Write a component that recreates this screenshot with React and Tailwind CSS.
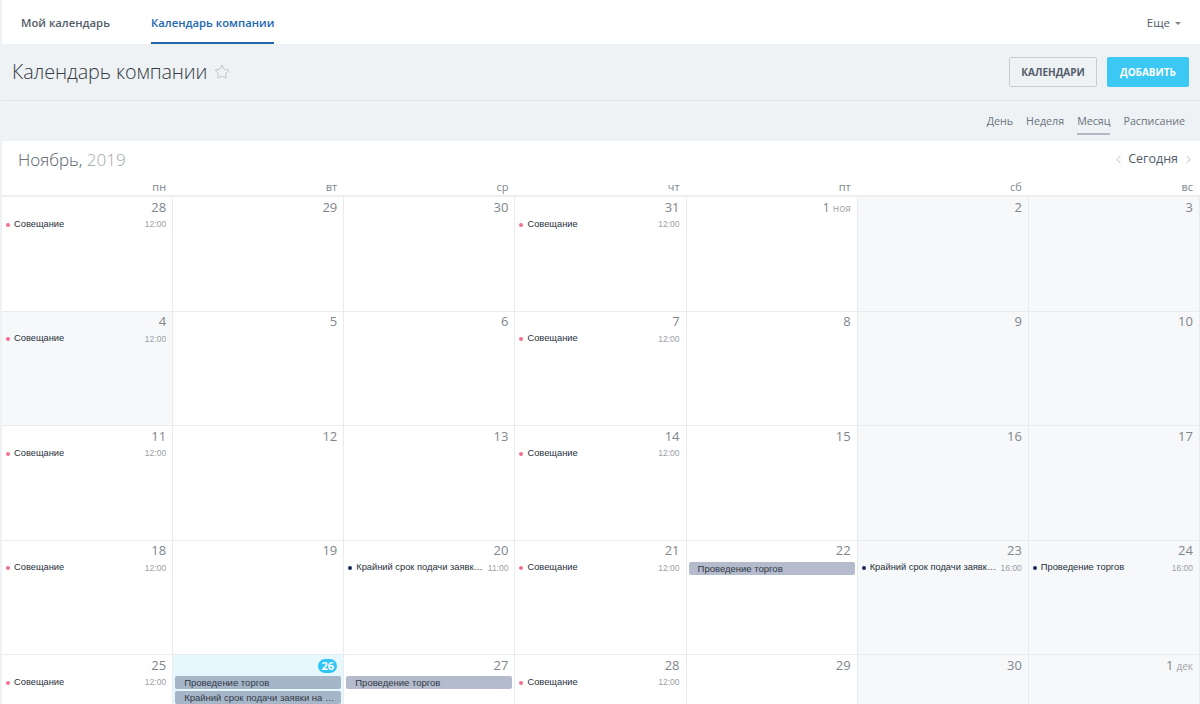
import { Star, ChevronLeft, ChevronRight } from "lucide-react";

const pink = "#f2708f";
const navy = "#1b2a59";

// each row: 7 cells
const weeks = [
  [
    { d: "28", ev: [{ t: "Совещание", time: "12:00", c: pink }] },
    { d: "29" },
    { d: "30" },
    { d: "31", ev: [{ t: "Совещание", time: "12:00", c: pink }] },
    { d: "1", m: "ноя" },
    { d: "2", off: true },
    { d: "3", off: true },
  ],
  [
    { d: "4", off: true, ev: [{ t: "Совещание", time: "12:00", c: pink }] },
    { d: "5" },
    { d: "6" },
    { d: "7", ev: [{ t: "Совещание", time: "12:00", c: pink }] },
    { d: "8" },
    { d: "9", off: true },
    { d: "10", off: true },
  ],
  [
    { d: "11", ev: [{ t: "Совещание", time: "12:00", c: pink }] },
    { d: "12" },
    { d: "13" },
    { d: "14", ev: [{ t: "Совещание", time: "12:00", c: pink }] },
    { d: "15" },
    { d: "16", off: true },
    { d: "17", off: true },
  ],
  [
    { d: "18", ev: [{ t: "Совещание", time: "12:00", c: pink }] },
    { d: "19" },
    { d: "20", ev: [{ t: "Крайний срок подачи заявки на аукцион", time: "11:00", c: navy }] },
    { d: "21", ev: [{ t: "Совещание", time: "12:00", c: pink }] },
    { d: "22", bars: ["Проведение торгов"] },
    { d: "23", off: true, ev: [{ t: "Крайний срок подачи заявки на аукцион", time: "16:00", c: navy }] },
    { d: "24", off: true, ev: [{ t: "Проведение торгов", time: "16:00", c: navy }] },
  ],
  [
    { d: "25", ev: [{ t: "Совещание", time: "12:00", c: pink }] },
    { d: "26", today: true, bars: ["Проведение торгов", "Крайний срок подачи заявки на аукцион"] },
    { d: "27", bars: ["Проведение торгов"] },
    { d: "28", ev: [{ t: "Совещание", time: "12:00", c: pink }] },
    { d: "29" },
    { d: "30", off: true },
    { d: "1", m: "дек", off: true },
  ],
];

const weekdays = ["пн", "вт", "ср", "чт", "пт", "сб", "вс"];

function DayCell({ cell }) {
  const bg = cell.today ? "bg-[#e6f8fe]" : cell.off ? "bg-[#f6f8f9]" : "bg-white";
  return (
    <div className={`${bg} border-r border-b border-[#e9ebee] overflow-hidden`}>
      <div className="h-[21px] flex items-center justify-end pr-[6px]">
        {cell.today ? (
          <span className="h-[14px] min-w-[19px] px-[3px] rounded-full bg-[#2fc6f6] text-white text-[11px] font-bold leading-none flex items-center justify-center">
            {cell.d}
          </span>
        ) : (
          <span className="text-[13px] text-[#80868e]">
            {cell.d}
            {cell.m && <span className="text-[10px] ml-[3px] text-[#a0a5ab]">{cell.m}</span>}
          </span>
        )}
      </div>
      <div className="flex flex-col gap-[2px] px-[2px]">
        {cell.bars &&
          cell.bars.map((b) => (
            <div
              key={b}
              className={`h-[13px] rounded-[2px] ${cell.today ? "bg-[#a6b6c9]" : "bg-[#b3bbcc]"} pl-[9px] pr-[6px] text-[9.5px] leading-[13px] text-[#333a45] truncate font-['Liberation_Sans',Arial,sans-serif]`}
            >
              {b}
            </div>
          ))}
        {cell.ev &&
          cell.ev.map((e) => (
            <div key={e.t} className="h-[13px] flex items-center pl-[2px] pr-[4px] font-['Liberation_Sans',Arial,sans-serif]">
              <span className="w-[4px] h-[4px] rounded-full shrink-0" style={{ backgroundColor: e.c }} />
              <span className="ml-[4px] text-[9.3px] text-[#27303b] truncate flex-1">{e.t}</span>
              <span className="ml-[3px] text-[8.5px] text-[#9aa0a6] shrink-0">{e.time}</span>
            </div>
          ))}
      </div>
    </div>
  );
}

export default function App() {
  return (
    <div className="w-[1200px] h-[704px] overflow-hidden bg-[#eef2f4] pl-[2px] font-['Open_Sans',sans-serif]">
      {/* top tabs */}
      <div className="h-[44px] bg-white flex items-stretch pl-[19px] pr-[19px]">
        <div className="flex items-center text-[11.3px] font-semibold text-[#535c69] mr-[41px] pt-[2px]">Мой календарь</div>
        <div className="flex items-center text-[11.3px] font-semibold text-[#2067b0] border-b-2 border-[#2067b0] pt-[4px]">
          Календарь компании
        </div>
        <div className="ml-auto flex items-center text-[11.5px] text-[#535c69] pt-[2px]">
          Еще
          <span className="ml-[5px] w-0 h-0 border-l-[3px] border-r-[3px] border-t-[3px] border-l-transparent border-r-transparent border-t-[#80868e]" />
        </div>
      </div>

      {/* title */}
      <div className="h-[57px] flex items-center pl-[10px] pr-[11px] border-b border-[#e1e5e9]">
        <h1 className="text-[19.8px] font-light text-[#333b45] leading-none tracking-[-0.1px]">Календарь компании</h1>
        <Star className="ml-[7px] w-[16px] h-[16px] text-[#b9bfc6]" strokeWidth={1.4} />
        <div className="ml-auto flex gap-[10px]">
          <button className="h-[30px] w-[88px] border border-[#c6cdd3] rounded-[2px] text-[10px] font-bold text-[#535c69]">
            КАЛЕНДАРИ
          </button>
          <button className="h-[30px] w-[82px] rounded-[2px] bg-[#3bc8f5] text-[10px] font-bold text-white">
            ДОБАВИТЬ
          </button>
        </div>
      </div>

      {/* views */}
      <div className="h-[40px] flex items-center justify-end pr-[15px] gap-[13px] text-[10.7px] text-[#6b737c]">
        <span>День</span>
        <span>Неделя</span>
        <span className="relative">
          Месяц
          <span className="absolute left-0 right-0 -bottom-[6px] h-[2px] bg-[#b3b9c0]" />
        </span>
        <span>Расписание</span>
      </div>

      {/* calendar */}
      <div className="bg-white">
        <div className="h-[37px] flex items-center pl-[16px] pr-[5px]">
          <div className="text-[17px] font-light text-[#535c69]">
            Ноябрь, <span className="text-[#a0a5ab]">2019</span>
          </div>
          <div className="ml-auto flex items-center text-[12.5px] text-[#535c69]">
            <ChevronLeft className="w-[13px] h-[13px] text-[#a8aeb4] mr-[3px]" strokeWidth={1.5} />
            Сегодня
            <ChevronRight className="w-[13px] h-[13px] text-[#a8aeb4] ml-[4px]" strokeWidth={1.5} />
          </div>
        </div>
        <div className="grid grid-cols-7 h-[19px] border-b-2 border-[#eceef0]">
          {weekdays.map((w) => (
            <div key={w} className="text-right pr-[7px] text-[11px] text-[#80868e] leading-[17px]">
              {w}
            </div>
          ))}
        </div>
        <div className="grid grid-cols-7 auto-rows-[114.5px]">
          {weeks.map((week, i) => week.map((cell, j) => <DayCell key={`${i}-${j}`} cell={cell} />))}
        </div>
      </div>
    </div>
  );
}
